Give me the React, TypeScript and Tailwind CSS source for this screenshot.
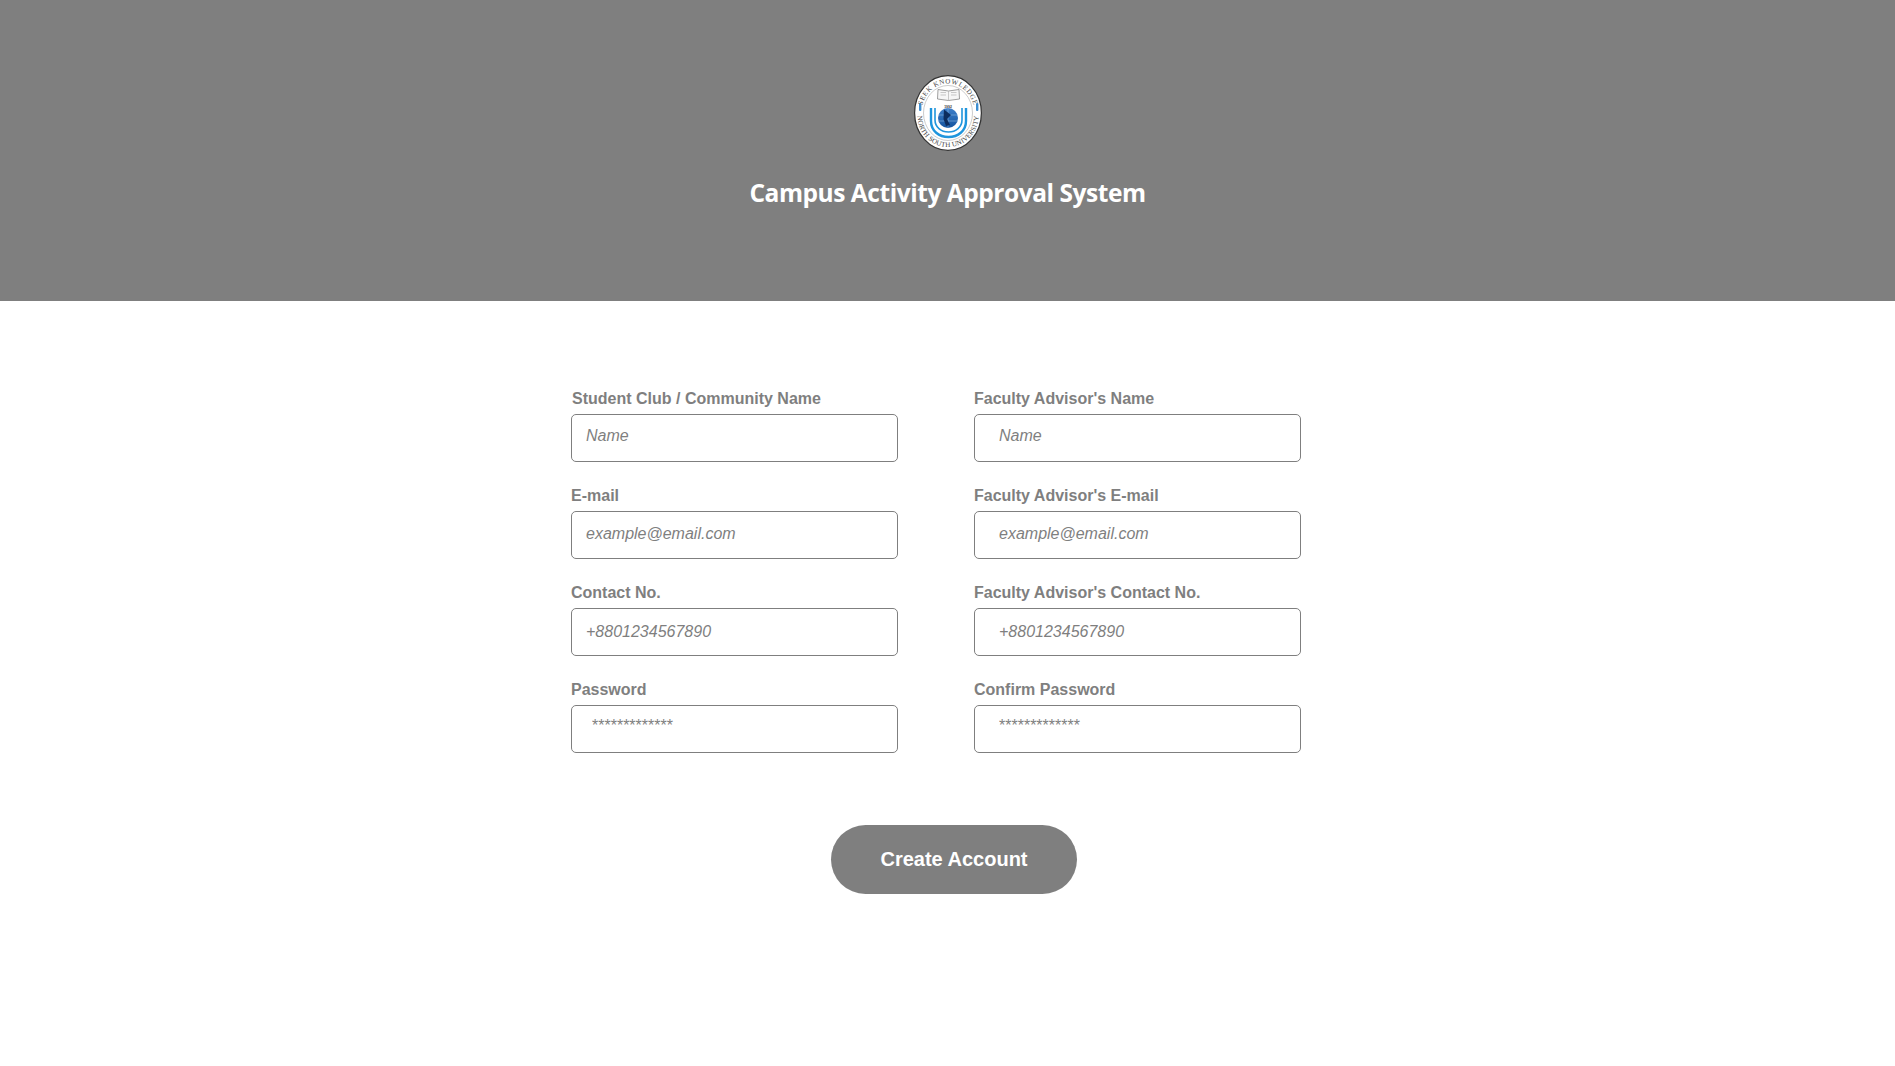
import React from "react";

const rows = [
  [
    { label: "Student Club / Community Name", placeholder: "Name", labelClass: "pl-px", inputClass: "pl-[14px] pb-[4px] italic" },
    { label: "Faculty Advisor's Name", placeholder: "Name", labelClass: "", inputClass: "pl-[24px] pb-[4px] italic" },
  ],
  [
    { label: "E-mail", placeholder: "example@email.com", labelClass: "", inputClass: "pl-[14px] pb-[2px] italic" },
    { label: "Faculty Advisor's E-mail", placeholder: "example@email.com", labelClass: "", inputClass: "pl-[24px] pb-[2px] italic" },
  ],
  [
    { label: "Contact No.", placeholder: "+8801234567890", labelClass: "", inputClass: "pl-[14px] italic" },
    { label: "Faculty Advisor's Contact No.", placeholder: "+8801234567890", labelClass: "", inputClass: "pl-[24px] italic" },
  ],
  [
    { label: "Password", placeholder: "*************", labelClass: "", inputClass: "pl-[20px] pb-[7px]" },
    { label: "Confirm Password", placeholder: "*************", labelClass: "", inputClass: "pl-[24px] pb-[7px]" },
  ],
];

const Logo = () => (
  <svg width="68" height="76" viewBox="0 0 68 76" className="block">
    <defs>
      <path id="topArc" d="M7.5 38 A26.5 29.5 0 0 1 60.5 38" />
      <path id="bottomArc" d="M3.5 41 A30.5 31 0 0 0 64.5 41" />
      <linearGradient id="globe" x1="0" y1="0" x2="0" y2="1">
        <stop offset="0" stopColor="#3f7fc9" />
        <stop offset="1" stopColor="#14549f" />
      </linearGradient>
    </defs>
    <ellipse cx="34" cy="38" rx="33.4" ry="37.4" fill="#fff" stroke="#333" strokeWidth="1.2" />
    <ellipse cx="34" cy="38" rx="24.5" ry="27.5" fill="#fff" stroke="#999" strokeWidth="0.5" />
    <text fontSize="7" fontFamily="'Liberation Serif', serif" fill="#444" letterSpacing="0.6">
      <textPath href="#topArc" startOffset="50%" textAnchor="middle">SEEK KNOWLEDGE</textPath>
    </text>
    <text fontSize="7" fontFamily="'Liberation Serif', serif" fill="#444" letterSpacing="0.2">
      <textPath href="#bottomArc" startOffset="50%" textAnchor="middle">NORTH SOUTH UNIVERSITY</textPath>
    </text>
    {/* book */}
    <path d="M24 14.5 L34.5 16 L45 14.5 L45.5 24 L34.5 25.5 L23.5 24 Z" fill="#f6f6f6" stroke="#777" strokeWidth="0.7" />
    <path d="M34.5 16 V25.5 M26.5 17.5 H32 M26.5 20 H32 M37 17.5 H42.5 M37 20 H42.5" stroke="#aaa" strokeWidth="0.6" />
    {/* candles */}
    <rect x="5" y="28" width="2.4" height="8" rx="1" fill="#3e8ed0" />
    <rect x="62" y="28" width="2.4" height="8" rx="1" fill="#3e8ed0" />
    {/* rings */}
    <path d="M17 33 V46 C17 56 25 62 34.5 62 C44 62 52 56 52 46 V33" fill="none" stroke="#1f95dd" strokeWidth="2.4" />
    <path d="M21 33 V45 C21 52 27 57 34.5 57 C42 57 48 52 48 45 V33" fill="none" stroke="#1f95dd" strokeWidth="1.6" />
    {/* globe */}
    <circle cx="34" cy="43" r="10" fill="url(#globe)" />
    <path d="M24.5 40 H43.5 M24.5 46 H43.5 M34 33 V53" stroke="#9cc4ea" strokeWidth="0.5" />
    <path d="M30 34.5 L37 40 L33 44 L36 50 L32 51 L29.5 44 Z" fill="#0d2d5e" />
    <text x="34" y="32.5" fontSize="3.4" textAnchor="middle" fontFamily="'Liberation Sans', sans-serif" fontWeight="700" fill="#333">1992</text>
  </svg>
);

const App: React.FC = () => {
  return (
    <div className="min-h-[1066px] bg-white font-['Liberation_Sans',Arial,sans-serif]">
      {/* Header */}
      <div className="flex h-[301px] flex-col items-center bg-[#7f7f7f] pt-[75px]">
        <Logo />
        <h1 className="mt-[25px] font-['Open_Sans',sans-serif] text-[24.5px] leading-[34px] font-bold tracking-[-0.45px] text-white">
          Campus Activity Approval System
        </h1>
      </div>

      {/* Form */}
      <div className="ml-[571px] mt-[87px] grid w-[731px] grid-cols-[328px_328px] gap-x-[75px] gap-y-[23px]">
        {rows.map((row) =>
          row.map((field) => (
            <div key={field.label} className="flex flex-col">
              <label className={`h-[26px] pt-px text-[16px] leading-[20px] font-bold text-[#7f7f7f] ${field.labelClass}`}>
                {field.label}
              </label>
              <input
                type="text"
                placeholder={field.placeholder}
                className={`h-[48px] w-[327px] rounded-[5px] border border-[#7f7f7f] pr-3 text-[16px] outline-none placeholder:text-[#7f7f7f] ${field.inputClass}`}
              />
            </div>
          )),
        )}
      </div>

      {/* Submit */}
      <div className="mt-[72px] flex justify-center pl-[13px]">
        <button className="h-[69px] w-[246px] rounded-full bg-[#7f7f7f] pb-[2px] text-[20px] font-bold text-white">
          Create Account
        </button>
      </div>
    </div>
  );
};

export default App;
